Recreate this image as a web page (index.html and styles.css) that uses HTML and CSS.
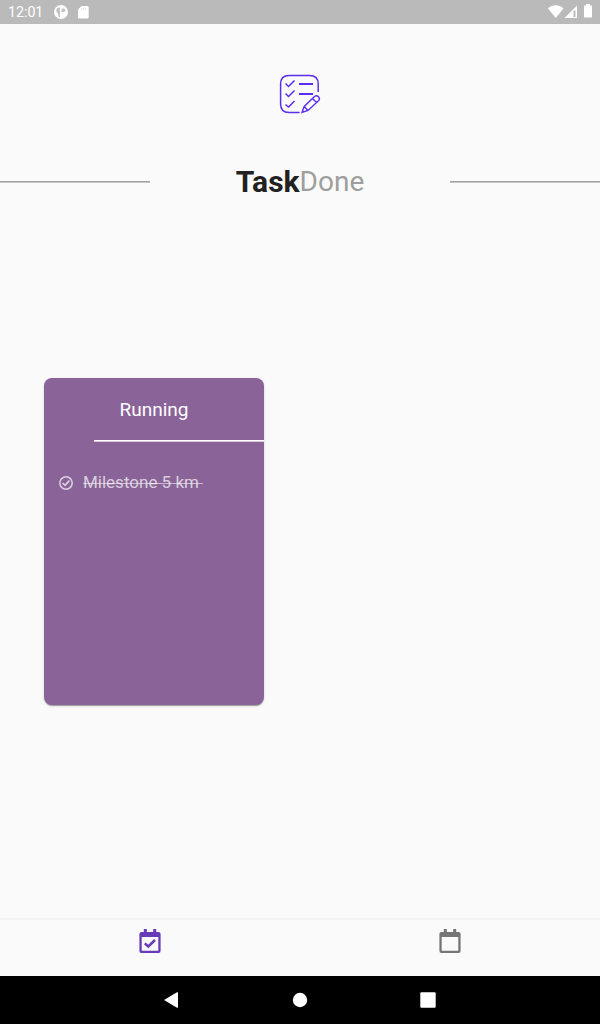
FILE: index.html
```html
<!DOCTYPE html>
<html lang="en">
<head>
<meta charset="utf-8">
<title>TaskDone</title>
<link rel="stylesheet" href="styles.css">
</head>
<body>
<div class="app">
  <header class="status">
    <span class="clock">12:01</span>
    <svg class="status-left" width="40" height="24" viewBox="0 0 40 24">
      <circle cx="9" cy="12" r="7" fill="#fff"/>
      <path d="M8 7.500h-1a3 3 0 0 0-1.500 5.500L7 17h1z" fill="#c4c4c4"/>
      <path d="M9.500 8.500h2a1.800 1.800 0 0 1 0 3.600h-2z" fill="#c4c4c4"/>
      <path d="M29.500 6H35.500a1.500 1.500 0 0 1 1.200 1.500V17A1.500 1.500 0 0 1 35 18.500H27.500A1.500 1.500 0 0 1 26 17V9.500z" fill="#fff"/>
      <path d="M29.500 8v2M31.500 8v2M33.500 8v2" stroke="#ddd" stroke-width=".8"/>
    </svg>
    <svg class="status-right" width="52" height="24" viewBox="0 0 52 24">
      <path d="M0 8.500C4.500 4.200 11 4.200 15.500 8.500L7.750 18z" fill="#fff"/>
      <path d="M29 5.500V18H16.500z" fill="#fff"/>
      <path d="M25.500 10.500h2v6.500h-2z" fill="#bbb"/>
      <path d="M38 4h4v1.500h1.200q.8 0 .8.800v10.400q0 .8-.8.800h-6.400q-.8 0-.8-.8V6.300q0-.8.800-.8H38z" fill="#fff"/>
    </svg>
  </header>
  <main class="content">
    <svg class="logo" width="42" height="40" viewBox="0 0 42 40" fill="none" stroke="#5a2df0" stroke-width="1.500">
      <path d="M20.500 38.500H10Q1.600 38.500 1.600 30V10Q1.600 1.600 10 1.600H30.500Q39.200 1.600 39.200 10V18"/>
      <path d="M6.500 9.500L9.500 12.500L15.500 6.500M6.500 19.500L9.500 22.500L15.500 16.500M6.500 30.500L9.500 33L15.500 27"/>
      <path d="M20 10H34M20 20H34" stroke-width="1.900"/>
      <path d="M23 38.500L25.200 32.500L35.500 22.500Q37.500 20.800 39.500 22.700Q41.400 24.700 39.500 26.700L29 36.500ZM25.200 32.500L29 36.500M33.500 24.500L37.500 28.600" stroke-width="1.400"/>
    </svg>
    <div class="heading">
      <span class="rule"></span>
      <h1 class="title"><span class="strong">Task</span><span class="light">Done</span></h1>
      <span class="rule"></span>
    </div>
    <article class="card">
      <h2 class="card-title">Running</h2>
      <div class="divider"></div>
      <div class="task">
        <svg width="14" height="14" viewBox="0 0 14 14" fill="none" stroke="currentColor" stroke-width="1.500">
          <circle cx="7" cy="7" r="6.200"/>
          <path d="M3.600 7L6 9.400L10.400 4.700" stroke-width="1.700"/>
        </svg>
        <span class="task-name">Milestone 5 km&nbsp;</span>
      </div>
    </article>
  </main>
  <nav class="tabs">
    <a class="tab active">
      <svg width="22" height="24" viewBox="0 0 22 24">
        <path fill="currentColor" fill-rule="evenodd" d="M4.800 0h3v3h6.400V0h3v3h2.300Q21.600 3 21.600 5v17q0 2-2 2H2.400q-2 0-2-2V5q0-2 2-2h2.400zM2.700 8v13.300q0 .5.500.5h15.600q.5 0 .5-.5V8z"/>
        <path d="M5.800 14.300L9.300 17.500L16 11" fill="none" stroke="currentColor" stroke-width="2.500"/>
      </svg>
    </a>
    <a class="tab">
      <svg width="22" height="24" viewBox="0 0 22 24">
        <path fill="currentColor" fill-rule="evenodd" d="M4.800 0h3v3h6.400V0h3v3h2.300Q21.600 3 21.600 5v17q0 2-2 2H2.400q-2 0-2-2V5q0-2 2-2h2.400zM2.700 8v13.300q0 .5.500.5h15.600q.5 0 .5-.5V8z"/>
      </svg>
    </a>
  </nav>
  <footer class="system">
    <svg width="16" height="16" viewBox="0 0 16 16"><path d="M0 8L13 .3Q14 0 14 1V15Q14 16 13 15.700z" fill="#fff"/></svg>
    <svg width="16" height="16" viewBox="0 0 16 16"><circle cx="8" cy="8" r="7.200" fill="#fff"/></svg>
    <svg width="16" height="16" viewBox="0 0 16 16"><rect x=".3" y=".3" width="15.400" height="15.400" rx="1" fill="#fff"/></svg>
  </footer>
</div>
</body>
</html>
```
FILE: styles.css
```css
* { box-sizing: border-box; }
body { margin: 0; font-family: Roboto, sans-serif; background: #fafafa; }
svg { display: block; flex: none; }
.app { width: 600px; height: 1024px; display: flex; flex-direction: column; }
.status { height: 24px; background: #bababa; color: #fff; display: flex; align-items: center; padding: 0 8px; }
.clock { width: 44px; font-size: 14.2px; line-height: 24px; }
.status-right { margin-left: auto; margin-right: -8px; }
.content { flex: 1; display: flex; flex-direction: column; padding-top: 50px; }
.logo { align-self: center; }
.heading { display: grid; grid-template-columns: 150px 300px 150px; align-items: center; height: 40px; margin-top: 47px; }
.rule { height: 2px; margin-top: 1px; background: #9e9e9e; border-bottom: 1px solid #c8c8c8; }
.title { margin: 0; display: flex; justify-content: center; height: 40px; }
.strong { font-size: 30px; font-weight: 700; line-height: 42px; color: #212121; }
.light { font-size: 28px; font-weight: 400; line-height: 42px; color: #9e9e9e; }
.card { width: 220px; height: 327px; margin: 177px 0 0 44px; background: #8a6398; border-radius: 8px; box-shadow: 0 2px 1px -1px rgba(0,0,0,.2), 0 1px 1px rgba(0,0,0,.14), 0 1px 3px rgba(0,0,0,.12); color: #fff; }
.card-title { margin: 0; padding-top: 20px; font-size: 19px; font-weight: 400; line-height: 24px; text-align: center; }
.divider { margin: 18px 0 0 50px; height: 2px; background: #fff; border-bottom: 1px solid #d8cadc; }
.task { display: flex; align-items: center; gap: 10px; margin: 30px 0 0 15px; height: 22px; color: rgba(255,255,255,.7); }
.task-name { position: relative; font-size: 17px; line-height: 22px; padding-bottom: 2px; }
.task-name::after { content: ""; position: absolute; left: 0; right: 0; top: 12px; height: 1px; background: rgba(255,255,255,.55); }
.tabs { height: 58px; display: grid; grid-template-columns: 1fr 1fr; border-top: 2px solid #f2f2f2; }
.tab { display: flex; justify-content: center; padding-top: 9px; color: #757575; }
.active { color: #673ab7; }
.system { height: 48px; background: #000; display: flex; align-items: center; justify-content: space-between; padding: 0 164px; }
```
